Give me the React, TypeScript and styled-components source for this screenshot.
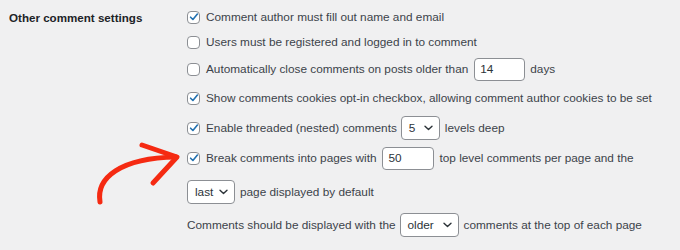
import { memo } from 'react';
import styled, { createGlobalStyle } from 'styled-components';

const GlobalStyle = createGlobalStyle`
  html, body {
    margin: 0;
    padding: 0;
    background: #f0f0f1;
  }
  body {
    font-family: 'Liberation Sans', Arial, sans-serif;
    color: #3c434a;
  }
`;

// 整体布局：左侧标题 + 右侧选项
const Page = styled.div`
  position: relative;
  width: 680px;
  height: 250px;
  display: grid;
  grid-template-columns: 187px 1fr;
  box-sizing: border-box;
  padding-top: 5px;
  overflow: hidden;
`;

const Heading = styled.div`
  padding-left: 9px;
  height: 24px;
  display: flex;
  align-items: center;
  font-size: 11.6px;
  font-weight: 700;
  color: #1d2327;
`;

const Options = styled.div`
  display: flex;
  flex-direction: column;
`;

const Row = styled.div<{ $gap?: number }>`
  display: flex;
  align-items: center;
  height: 24px;
  margin-top: ${(p) => p.$gap ?? 0}px;
  font-size: 11.8px;
  white-space: nowrap;
`;

const Box = styled.span`
  width: 13px;
  height: 13px;
  box-sizing: border-box;
  margin-right: 6px;
  border: 1px solid #8c8f94;
  border-radius: 4px;
  background: #fff;
  display: flex;
  align-items: center;
  justify-content: center;
  flex-shrink: 0;
`;

const NumberInput = styled.input<{ $w: number }>`
  width: ${(p) => p.$w}px;
  height: 23px;
  box-sizing: border-box;
  margin: 0 5px 0 6px;
  padding: 0 5px;
  border: 1px solid #8c8f94;
  border-radius: 4px;
  background: #fff;
  font: inherit;
  font-size: 11.8px;
  color: #2c3338;
  outline: none;
`;

const Select = styled.div<{ $w: number; $first?: boolean }>`
  width: ${(p) => p.$w}px;
  height: 24px;
  box-sizing: border-box;
  margin: 0 5px 0 ${(p) => (p.$first ? 0 : 4)}px;
  padding: 0 6px 0 7px;
  border: 1px solid #8c8f94;
  border-radius: 4px;
  background: #fff;
  display: flex;
  align-items: center;
  justify-content: space-between;
  color: #2c3338;
`;

const Arrow = styled.svg`
  position: absolute;
  left: 0;
  top: 0;
  pointer-events: none;
`;

function Check({ on }: { on?: boolean }) {
  return (
    <Box>
      {on && (
        <svg width="10" height="10" viewBox="0 0 10 10">
          <path d="M1.6 5.2 L3.9 7.5 L8.4 2" fill="none" stroke="#2271b1" strokeWidth="1.6" strokeLinecap="round" strokeLinejoin="round" />
        </svg>
      )}
    </Box>
  );
}

function Dropdown({ value, w, first }: { value: string; w: number; first?: boolean }) {
  return (
    <Select $w={w} $first={first}>
      <span>{value}</span>
      <svg width="9" height="6" viewBox="0 0 9 6">
        <path d="M1 1.2 L4.5 4.6 L8 1.2" fill="none" stroke="#2c3338" strokeWidth="1.4" strokeLinecap="round" strokeLinejoin="round" />
      </svg>
    </Select>
  );
}

const App = memo(() => {
  return (
    <>
      <GlobalStyle />
      <Page>
        <div>
          <Heading>Other comment settings</Heading>
        </div>
        <Options>
          <Row>
            <Check on />
            Comment author must fill out name and email
          </Row>
          <Row $gap={1}>
            <Check />
            Users must be registered and logged in to comment
          </Row>
          <Row $gap={3}>
            <Check />
            Automatically close comments on posts older than
            <NumberInput $w={51} value="14" readOnly />
            days
          </Row>
          <Row $gap={5}>
            <Check on />
            Show comments cookies opt-in checkbox, allowing comment author cookies to be set
          </Row>
          <Row $gap={6}>
            <Check on />
            Enable threaded (nested) comments
            <Dropdown value="5" w={39} />
            levels deep
          </Row>
          <Row $gap={6}>
            <Check on />
            Break comments into pages with
            <NumberInput $w={52} value="50" readOnly />
            top level comments per page and the
          </Row>
          <Row $gap={10}>
            <Dropdown value="last" w={48} first />
            page displayed by default
          </Row>
          <Row $gap={9}>
            Comments should be displayed with the
            <Dropdown value="older" w={59} />
            comments at the top of each page
          </Row>
        </Options>
        <Arrow width="680" height="250" viewBox="0 0 680 250">
          <g fill="none" stroke="#f52a12" strokeWidth="5" strokeLinecap="round" strokeLinejoin="round">
            <path d="M100 202 C 96 178, 120 158, 176 157" />
            <path d="M142 145 L177 157 L153 183" />
          </g>
        </Arrow>
      </Page>
    </>
  );
});

export default App;
